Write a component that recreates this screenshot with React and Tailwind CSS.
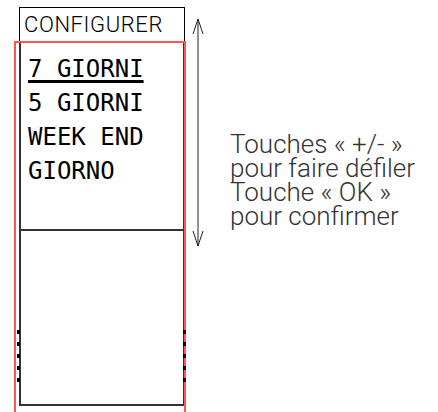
import React from "react";

function Dots() {
  return (
    <div className="flex flex-col gap-[8px]">
      <div className="w-[3px] h-[4px] bg-black" />
      <div className="w-[3px] h-[4px] bg-black" />
      <div className="w-[3px] h-[4px] bg-black" />
      <div className="w-[3px] h-[4px] bg-black" />
      <div className="w-[3px] h-[4px] bg-black" />
    </div>
  );
}

export default function App() {
  const lcd = { fontFamily: '"DejaVu Sans Mono", "Liberation Mono", monospace' };
  return (
    <div
      className="relative w-[438px] h-[412px] bg-white overflow-hidden flex text-[#222]"
      style={{ fontFamily: 'Roboto, "Liberation Sans", sans-serif' }}
    >
      <div className="ml-[19px] mt-[7px] w-[166px] flex flex-col">
        <div className="h-[34px] border border-black border-b-0 pl-[4px] text-[22px] tracking-[0.6px] leading-[34px] font-light text-black">
          CONFIGURER
        </div>
        <div
          className="h-[188px] border-x-2 border-[#333] pt-[11px] pl-[7px] text-[24px] leading-[34px] text-black"
          style={lcd}
        >
          <div>
            <span className="underline decoration-[3px] underline-offset-[3px]">7 GIORNI</span>
          </div>
          <div>5 GIORNI</div>
          <div>WEEK END</div>
          <div>GIORNO</div>
        </div>
        <div className="h-[2px] bg-[#333]" />
        <div className="h-[175px] border-x-2 border-b-2 border-[#333]" />
      </div>

      <div className="ml-[7px] mt-[18px]">
        <svg width="12" height="229" viewBox="0 0 12 229" fill="none" stroke="#222" strokeWidth="1">
          <path d="M6 1 V228" />
          <path d="M1 16 L6 1 L11 16" />
          <path d="M1 213 L6 228 L11 213" />
        </svg>
      </div>

      <div className="ml-[26px] mt-[132px] text-[26px] leading-[24px] font-light text-[#333] whitespace-nowrap">
        <div>Touches « +/- »</div>
        <div>pour faire défiler</div>
        <div>Touche « OK »</div>
        <div>pour confirmer</div>
      </div>

      <div className="absolute left-[14px] top-[41px] w-[172px] h-[400px] border-2 border-b-0 border-[#ff5555]" />
      <div className="absolute left-[17px] top-[330px]">
        <Dots />
      </div>
      <div className="absolute left-[183px] top-[330px]">
        <Dots />
      </div>
    </div>
  );
}
